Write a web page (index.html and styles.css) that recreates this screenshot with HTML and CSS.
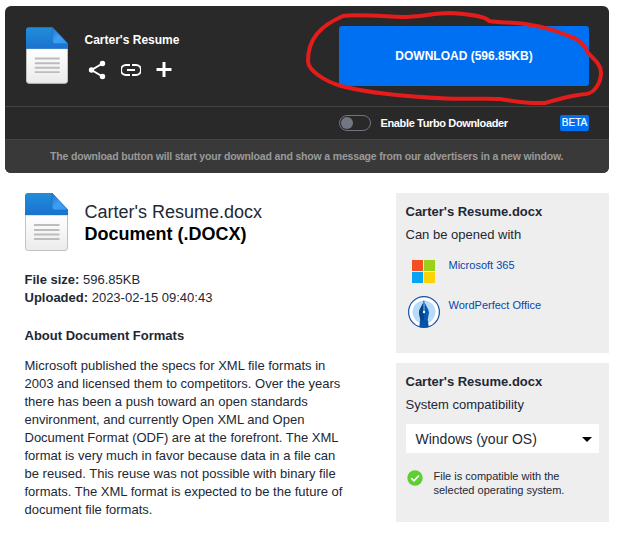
FILE: index.html
```html
<!DOCTYPE html>
<html lang="en">
<head>
<meta charset="utf-8">
<title>Carter's Resume</title>
<link rel="stylesheet" href="styles.css">
</head>
<body>
<svg class="defs" width="0" height="0" aria-hidden="true">
  <defs>
    <linearGradient id="blue" x2="0" y2="1"><stop stop-color="#218ed9"/><stop offset="1" stop-color="#1a72d0"/></linearGradient>
    <linearGradient id="paper" x2="0" y2="1"><stop stop-color="#fff"/><stop offset="1" stop-color="#ebebeb"/></linearGradient>
    <linearGradient id="fold" x2="1" y2="1"><stop stop-color="#1c73c9"/><stop offset=".5" stop-color="#3da0f5"/><stop offset="1" stop-color="#3296ec"/></linearGradient>
    <symbol id="doc" viewBox="0 0 43 58">
      <path d="M.5 22V55a2.5 2.5 0 0 0 2.500 2.500H40a2.500 2.500 0 0 0 2.500-2.500V22z" fill="url(#paper)" stroke="#c3c3c3"/>
      <path d="M0 22V3a3 3 0 0 1 3-3H27L43 17V22z" fill="url(#blue)"/>
      <path d="M27 0L43 17H30a3 3 0 0 1-3-3z" fill="url(#fold)" stroke="#1b6fc0" stroke-width=".6"/>
      <path d="M9 32H34.500M9 37H34.500M9 41.500H34.500M9 46H34.500" stroke="#bcbcbc" stroke-width="2"/>
    </symbol>
  </defs>
</svg>
<main class="page">
  <section class="panel">
    <div class="panel-top">
      <svg class="doc small"><use href="#doc"/></svg>
      <div class="file">
        <h1>Carter's Resume</h1>
        <div class="actions">
          <svg width="18" height="20" viewBox="0 0 18 20"><path d="M14.500 3.500L3.500 10L14.500 16.500" fill="none" stroke="#fff" stroke-width="2"/><g fill="#fff"><circle cx="14.500" cy="3.500" r="2.700"/><circle cx="3.500" cy="10" r="2.700"/><circle cx="14.500" cy="16.500" r="2.700"/></g></svg>
          <svg width="20" height="20" viewBox="0 0 20 20"><path d="M9 5H5a5 5 0 0 0 0 10H9M11 5H15a5 5 0 0 1 0 10H11M6 10H14" fill="none" stroke="#fff" stroke-width="2"/></svg>
          <svg width="16" height="20" viewBox="0 0 16 20"><path d="M.5 9.500H15.500M8 2V17" stroke="#fff" stroke-width="3"/></svg>
        </div>
      </div>
      <button class="download">DOWNLOAD (596.85KB)</button>
    </div>
    <div class="turbo">
      <span class="switch"></span><span class="turbo-label">Enable Turbo Downloader</span><span class="beta">BETA</span>
    </div>
    <div class="notice"><span>The download button will start your download and show a message from our advertisers in a new window.</span></div>
    <svg class="marker" viewBox="0 0 618 120"><path d="M489 21C486 17 470 14 450 13C434 13 420 17 402 17C379 16 355 14 343 16C320 26 308 39 308 61C308 70 324 81 341 86C372 94 413 97 446 98.500C468 99.500 485 98 500 99C513 101 524 103 532 103H545C562 98 573 95 586 94C595 93 601 82 601 73C601 65 596 61 588 53C585 45 578 39 569 36C559 32 546 27 531 25C515 22 501 23 489 21Z"/></svg>
  </section>
  <div class="columns">
    <article class="details">
      <header><svg class="doc"><use href="#doc"/></svg><div><div class="filename">Carter's Resume.docx</div><div class="filetype">Document (.DOCX)</div></div></header>
      <div class="meta"><div class="size"><b>File size:</b> 596.85KB</div><div class="date"><b>Uploaded:</b> 2023-02-15 09:40:43</div></div>
      <h2>About Document Formats</h2>
      <p>Microsoft published the specs for XML file formats in<br>2003 and licensed them to competitors. Over the years<br>there has been a push toward an open standards<br>environment, and currently Open XML and Open<br>Document Format (ODF) are at the forefront. The XML<br>format is very much in favor because data in a file can<br>be reused. This reuse was not possible with binary file<br>formats. The XML format is expected to be the future of<br>document file formats.</p>
    </article>
    <aside>
      <section class="card apps">
        <h3>Carter's Resume.docx</h3><div class="sub">Can be opened with</div>
        <a class="app"><svg class="ms" width="32" height="32" viewBox="0 0 32 32"><path fill="#f34f23" d="M4 4h11v11H4z"/><path fill="#9bd219" d="M16 4h11v11H16z"/><path fill="#06a5f1" d="M4 16h11v11H4z"/><path fill="#fbd307" d="M16 16h11v11H16z"/></svg><span>Microsoft 365</span></a>
        <a class="app"><svg width="32" height="32" viewBox="0 0 32 32"><clipPath id="disc"><circle cx="16" cy="16" r="15.500"/></clipPath><circle cx="16" cy="16" r="15.400" fill="#fff" stroke="#1451a4" stroke-width="1.200"/><circle cx="16" cy="16" r="11.500" fill="#b8dcf7"/><g clip-path="url(#disc)"><path d="M16 4C15 9 11.500 12 11 16.500L12.500 25H19.500L21 16.500C20.500 12 17 9 16 4Z" fill="#0757b6"/><path d="M16 4C15 9 11.500 12 11 16.500L12.500 25H16Z" fill="#064584"/><path d="M12 24.500H20L20.800 32H11.200Z" fill="#0752a8"/><path d="M16 6V15" stroke="#d7edff" stroke-width=".7"/><circle cx="16" cy="16" r="1.200" fill="#fff"/></g></svg><span>WordPerfect Office</span></a>
      </section>
      <section class="card">
        <h3>Carter's Resume.docx</h3><div class="sub">System compatibility</div>
        <div class="select"><span>Windows (your OS)</span><svg width="10" height="5" viewBox="0 0 10 5"><path d="M0 0H10L5 5Z"/></svg></div>
        <div class="compat"><svg width="16" height="16" viewBox="0 0 16 16"><circle cx="8" cy="8" r="7.700" fill="#5fce33"/><path d="M4.200 8.200L7 10.800L12 5.500" fill="none" stroke="#fff" stroke-width="1.700"/></svg><div><span class="c1">File is compatible with the</span><br><span class="c2">selected operating system.</span></div></div>
      </section>
    </aside>
  </div>
</main>
</body>
</html>
```
FILE: styles.css
```css
* { box-sizing: border-box; }
body { margin: 0; background: #fff; color: #222835; font: 13px/18px "Liberation Sans", Arial, sans-serif; }
h1, h2, h3, p { margin: 0; }
svg { display: block; flex-shrink: 0; }
.defs { position: absolute; }
.page { width: 618px; height: 534px; padding: 6px 9px 0 5px; white-space: nowrap; overflow: hidden; }
.panel { height: 167px; border-radius: 6px; background: #292929; color: #fff; overflow: hidden; }
.panel-top { height: 101px; display: flex; border-bottom: 1px solid #444; padding: 20px 20px 0 21px; }
.doc { width: 43px; height: 58px; }
.doc.small { width: 42px; height: 57px; margin-top: 1px; }
.file { margin-left: 16.5px; padding-top: 5px; }
h1 { font-size: 12px; line-height: 18px; }
.actions { display: flex; gap: 15px; margin: 11px 0 0 3.5px; }
.download { margin-left: auto; width: 250px; height: 60px; border: 0; border-radius: 3px; background: #0070f3; color: #fff; font: bold 12px "Liberation Sans", Arial, sans-serif; }
.turbo { height: 32px; display: flex; align-items: center; padding: 0 20px 0 334px; }
.switch { width: 32px; height: 16px; border: 1px solid #707580; border-radius: 8px; padding: 1px; }
.switch::before { content: ""; display: block; width: 12px; height: 12px; border-radius: 50%; background: #737783; }
.turbo-label { margin-left: 9.5px; font-size: 11px; font-weight: bold; letter-spacing: -.36px; }
.beta { margin-left: auto; width: 29px; height: 16px; border-radius: 2px; background: #0070f3; font-size: 10px; line-height: 16px; text-align: center; -webkit-text-stroke: .2px #fff; }
.notice { height: 34px; border-top: 1px solid #444; background: #393939; color: #999; font-size: 10.5px; font-weight: bold; letter-spacing: -.17px; line-height: 33px; padding-left: 45px; }
.marker { position: absolute; left: 0; top: 0; width: 618px; height: 120px; fill: none; stroke: #e51c1c; stroke-width: 4; stroke-linejoin: round; }
.columns { display: flex; justify-content: space-between; padding: 20px 0 0 20px; }
.details { width: 340px; }
.details header { display: flex; gap: 16.5px; }
.filename { font-size: 18px; line-height: 22px; padding-top: 8px; }
.filetype { color: #000; font-size: 18px; line-height: 22px; font-weight: bold; }
.meta { margin: 20px 0 0 -.5px; }
h2 { font-size: 13px; line-height: 18px; margin: 20px 0 0 -.5px; }
.details p { margin: 12px 0 0 -.5px; }
aside { width: 213px; display: flex; flex-direction: column; gap: 10px; }
.card { height: 159px; background: #eee; padding: 10px 10px 0; }
.card.apps { height: 160px; }
h3 { font-size: 13px; line-height: 18px; margin-left: -.5px; }
.sub { margin: 5px 0 0 -.5px; line-height: 18px; }
.app { display: flex; height: 40px; gap: 8.5px; padding-left: 2px; color: #0645ad; font-size: 11px; line-height: 14px; }
.sub + .app { margin-top: 10px; }
.app span { padding-top: 4px; }
.app svg { margin-top: 2px; }
.select { margin-top: 10px; width: 193px; height: 29px; background: #fff; display: flex; align-items: center; justify-content: space-between; padding: 0 7px 0 9.5px; font-size: 14px; }
.select svg { margin-top: 2px; }
.compat { display: flex; gap: 10.5px; padding: 16px 0 0 1px; font-size: 11px; line-height: 14px; }
.compat svg { margin-top: 1px; }
```
